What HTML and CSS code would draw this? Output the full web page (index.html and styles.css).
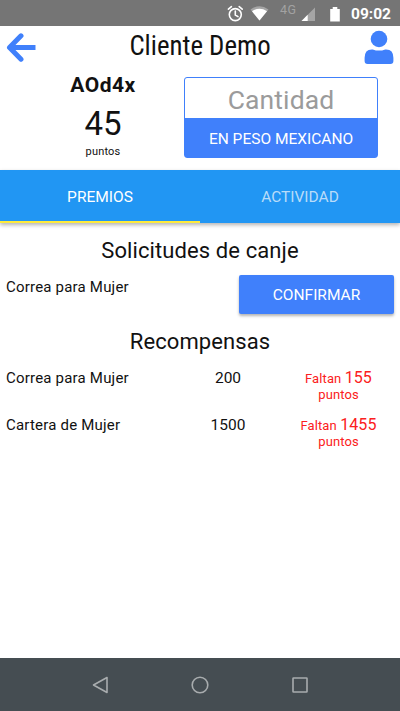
FILE: index.html
```html
<!DOCTYPE html>
<html lang="es">
<head>
<meta charset="utf-8">
<title>Cliente Demo</title>
<link rel="stylesheet" href="styles.css">
</head>
<body>
<div class="status">
  <svg class="status-icons" width="124" height="26" viewBox="0 0 124 26">
    <g fill="none" stroke="#fff" stroke-width="1.6" stroke-linecap="round">
      <circle cx="15.3" cy="14.6" r="6"/>
      <path d="M15.3 11v4l2.7 1.6M8.4 9.2l3-2.6M22.2 9.2l-3-2.6"/>
    </g>
    <path fill="#a5a5a5" d="M30.5 9.5Q39.500 3 48.500 9.500L39.500 20.500z"/>
    <path fill="#fff" d="M32 11.200Q39.500 6.500 47 11.200L39.500 20.500z"/>
    <path fill="#a5a5a5" d="M81.500 21H95V7.500z"/>
    <path fill="#fff" d="M81.500 21h6.200v-6.200z"/>
    <path fill="#fff" d="M110.200 9h2.500V7h4.600v2h2.500v12.500h-9.600z"/>
  </svg>
  <span class="network">4G</span>
  <span class="clock">09:02</span>
</div>
<header class="header">
  <svg class="back" width="30" height="29" viewBox="0 0 30 29" fill="none" stroke="#4080fb" stroke-width="5" stroke-linecap="round" stroke-linejoin="round"><path d="M15 2.800L3.500 14.500L15 26.200"/><path stroke-linecap="butt" d="M4 14.500H29.500"/></svg>
  <h1 class="title">Cliente Demo</h1>
  <svg class="user" width="30" height="34" viewBox="0 0 30 34" fill="#4080fb"><circle cx="15" cy="9" r="8.300"/><path d="M.6 31v-3.200q0-8.400 7.200-8.400h1q6.200 2.400 12.400 0h1q7.200 0 7.200 8.400V31q0 3-3 3H3.600Q.6 34 .6 31z"/></svg>
</header>
<section class="summary">
  <div class="balance">
    <div class="code">AOd4x</div>
    <div class="points">45</div>
    <div class="unit">puntos</div>
  </div>
  <div class="amount">
    <div class="amount-field">Cantidad</div>
    <div class="amount-label"><span>EN PESO MEXICANO</span></div>
  </div>
</section>
<nav class="tabs">
  <div class="tab tab-active"><span>PREMIOS</span></div>
  <div class="tab"><span>ACTIVIDAD</span></div>
</nav>
<main class="content">
  <h2 class="heading requests">Solicitudes de canje</h2>
  <div class="request">
    <span class="name">Correa para Mujer</span>
    <div class="confirm"><span>CONFIRMAR</span></div>
  </div>
  <h2 class="heading rewards">Recompensas</h2>
  <div class="reward">
    <span class="name">Correa para Mujer</span>
    <span class="cost">200</span>
    <span class="missing">Faltan <b>155</b><br>puntos</span>
  </div>
  <div class="reward">
    <span class="name">Cartera de Mujer</span>
    <span class="cost">1500</span>
    <span class="missing">Faltan <b>1455</b><br>puntos</span>
  </div>
</main>
<footer class="navbar">
  <svg width="20" height="20" viewBox="0 0 20 20"><path d="M17 2.500v15L3.500 10z"/></svg>
  <svg width="20" height="20" viewBox="0 0 20 20"><circle cx="10" cy="10" r="7.800"/></svg>
  <svg width="20" height="20" viewBox="0 0 20 20"><rect x="3" y="3" width="14" height="14" rx=".5"/></svg>
</footer>
</body>
</html>
```
FILE: styles.css
```css
* { box-sizing: border-box; }
body {
  margin: 0;
  width: 400px;
  height: 711px;
  display: flex;
  flex-direction: column;
  overflow: hidden;
  background: #fff;
  color: #111;
  font-family: Roboto, sans-serif;
  white-space: nowrap;
}
svg { display: block; flex: none; }
.status {
  position: relative;
  flex: none;
  height: 26px;
  padding: 0 9px 0 220px;
  background: #757575;
  display: flex;
  justify-content: space-between;
  color: #fff;
}
.network {
  position: absolute;
  left: 280px;
  top: 3px;
  color: #a2a2a2;
  font-size: 12.5px;
  letter-spacing: .4px;
  line-height: 14px;
}
.clock { font-size: 15.5px; font-weight: 700; line-height: 28px; }
.header {
  flex: none;
  height: 41px;
  padding: 4px 6px 0;
  display: flex;
  justify-content: space-between;
}
.back { margin-top: 3px; }
.title {
  margin: 0;
  font-family: "Roboto Condensed", Roboto, sans-serif;
  font-stretch: 75%;
  font-size: 26.8px;
  font-weight: 400;
  line-height: 32px;
}
.summary {
  flex: none;
  height: 103px;
  display: flex;
}
.balance {
  width: 184px;
  padding: 6px 0 0 22px;
  text-align: center;
}
.code { font-size: 21px; font-weight: 700; line-height: 25px; letter-spacing: .5px; }
.points { margin-top: 5px; font-size: 33px; line-height: 42px; }
.unit { margin-top: -1px; font-size: 11px; line-height: 16px; letter-spacing: .2px; }
.amount {
  width: 194px;
  height: 81px;
  margin-top: 10px;
  border: 1px solid #4080fb;
  border-radius: 3px;
  text-align: center;
}
.amount-field {
  height: 40px;
  color: #9b9b9b;
  font-size: 26.5px;
  letter-spacing: .1px;
  line-height: 44px;
}
.amount-label {
  height: 39px;
  background: #4080fb;
  color: #fff;
  font-size: 15.5px;
  line-height: 42px;
}
.tabs {
  flex: none;
  height: 53px;
  display: flex;
  background: #2196f3;
  box-shadow: 0 2px 4px rgba(0, 0, 0, .3);
}
.tab {
  width: 50%;
  color: #b9dcf9;
  font-size: 15.5px;
  line-height: 55px;
  text-align: center;
}
.tab-active { color: #fff; border-bottom: 2px solid #ffeb3b; }
.content { flex: 1; padding: 14px 6px 0; }
.heading {
  margin: 0;
  font-size: 22px;
  font-weight: 400;
  letter-spacing: .1px;
  line-height: 28px;
  text-align: center;
}
.request {
  height: 49px;
  margin-top: 10px;
  display: flex;
  justify-content: space-between;
}
.name { font-size: 15px; letter-spacing: .2px; line-height: 24px; }
.confirm {
  width: 155px;
  height: 39px;
  border-radius: 2px;
  background: #4080fb;
  box-shadow: 0 2px 3px rgba(0, 0, 0, .3);
  color: #fff;
  font-size: 15.5px;
  line-height: 41px;
  text-align: center;
}
.rewards { margin-top: 4px; }
.reward {
  height: 47px;
  display: grid;
  grid-template-columns: 167px 110px 111px;
}
.rewards + .reward { margin-top: 10px; }
.cost { font-size: 15.5px; line-height: 24px; text-align: center; }
.missing {
  padding-top: 4px;
  color: #fb2020;
  font-size: 13px;
  letter-spacing: .1px;
  line-height: 16px;
  text-align: center;
}
.missing b { font-size: 16px; font-weight: 400; line-height: 16px; }
.navbar {
  flex: none;
  height: 53px;
  padding: 0 90px;
  display: flex;
  align-items: center;
  justify-content: space-between;
  background: #454d52;
}
.navbar svg { fill: none; stroke: #a8acae; stroke-width: 1.6; stroke-linejoin: round; }
```
